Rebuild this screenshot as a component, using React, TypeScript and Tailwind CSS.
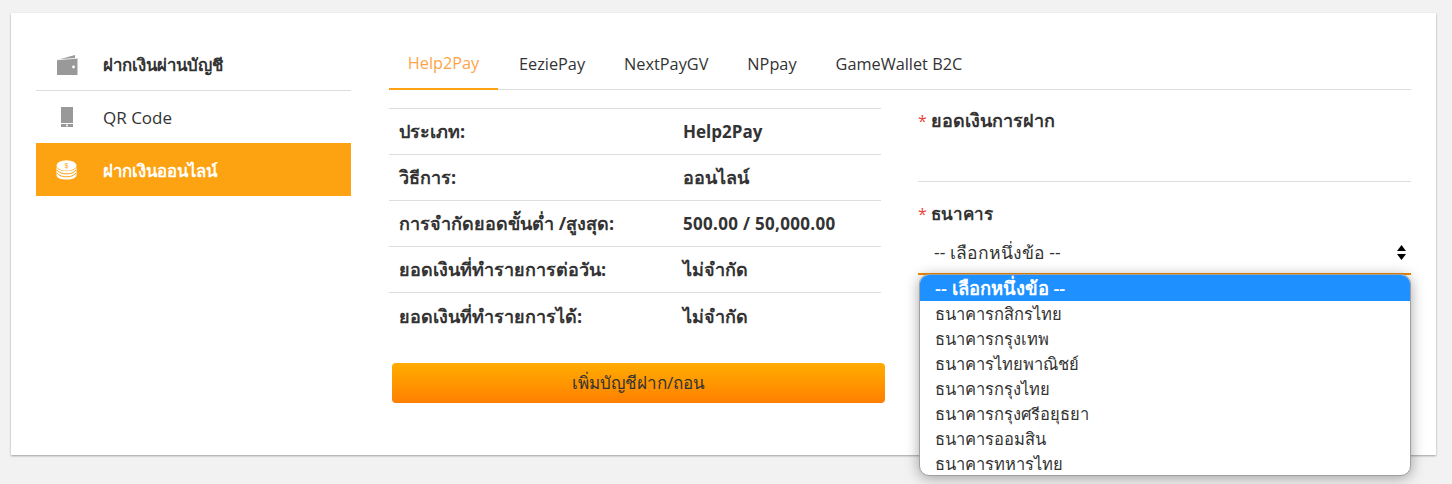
import { Fragment } from 'react'

const rows = [
  ['ประเภท:', 'Help2Pay', 'text-[17px]'],
  ['วิธีการ:', 'ออนไลน์', 'text-[18px]'],
  ['การจำกัดยอดขั้นต่ำ /สูงสุด:', '500.00 / 50,000.00', 'text-[17px] tracking-[0.3px]'],
  ['ยอดเงินที่ทำรายการต่อวัน:', 'ไม่จำกัด', 'text-[18px]'],
  ['ยอดเงินที่ทำรายการได้:', 'ไม่จำกัด', 'text-[18px]'],
]

const banks = [
  'ธนาคารกสิกรไทย',
  'ธนาคารกรุงเทพ',
  'ธนาคารไทยพาณิชย์',
  'ธนาคารกรุงไทย',
  'ธนาคารกรุงศรีอยุธยา',
  'ธนาคารออมสิน',
  'ธนาคารทหารไทย',
]

const tabs = ['EeziePay', 'NextPayGV', 'NPpay', 'GameWallet B2C']

function WalletIcon() {
  return (
    <svg width="21" height="20" viewBox="0 0 21 20">
      <path d="M0 5 L18 0 V3 H20.5 V20 H0 Z" fill="#999" />
      <path d="M0.5 4.8 L17 3.4 H20.5" stroke="#fff" strokeWidth="0.8" fill="none" />
      <circle cx="16.5" cy="12" r="1.4" fill="#fff" />
    </svg>
  )
}

function PhoneIcon() {
  return (
    <svg width="12" height="20" viewBox="0 0 12 20">
      <rect x="0" y="0" width="12" height="16" fill="#999" />
      <rect x="0" y="17" width="12" height="3" fill="#999" />
      <circle cx="6" cy="18.5" r="1" fill="#fff" />
    </svg>
  )
}

function CoinsIcon() {
  return (
    <svg width="21" height="20" viewBox="0 0 21 20">
      <ellipse cx="10.5" cy="5.5" rx="10" ry="5.2" fill="#fff" />
      <path d="M0.5 6 V15 C0.5 18 5 19.6 10.5 19.6 S20.5 18 20.5 15 V6 C20.5 9.5 16 11.2 10.5 11.2 S0.5 9.5 0.5 6 Z" fill="#fff" />
      <path d="M1 10 C3 13 7 13.8 10.5 13.8 S18 13 20 10 M1 13 C3 16 7 16.8 10.5 16.8 S18 16 20 13" stroke="#fda312" strokeWidth="1" fill="none" />
      <text x="10.5" y="8" fontSize="8" textAnchor="middle" fill="#fda312" fontFamily="Open Sans, sans-serif">$</text>
    </svg>
  )
}

export default function App() {
  return (
    <div className="h-[484px] overflow-hidden bg-[#f2f2f2] pl-[11px] pt-[13px] font-['Open_Sans','Noto_Sans',sans-serif] text-[#333]">
      <div className="relative flex h-[442px] w-[1425px] bg-white pl-[25px] pr-[25px] pt-[26px] shadow-[0_1px_2px_rgba(0,0,0,0.35)]">
        {/* Left menu */}
        <div className="w-[315px] shrink-0 text-[16.8px]">
          <div className="flex h-[52px] items-center border-b border-[#dedede] pl-[20px]">
            <div className="flex w-[47px] items-center pl-[1px]"><WalletIcon /></div>
            <span className="font-semibold">ฝากเงินผ่านบัญชี</span>
          </div>
          <div className="flex h-[52px] items-center pl-[20px]">
            <div className="flex w-[47px] items-center pl-[5px]"><PhoneIcon /></div>
            <span className="mt-[2px] text-[17px]">QR Code</span>
          </div>
          <div className="flex h-[53px] items-center bg-[#fda312] pl-[20px] text-white">
            <div className="flex w-[47px] items-center"><CoinsIcon /></div>
            <span className="mt-[2px] font-semibold">ฝากเงินออนไลน์</span>
          </div>
        </div>

        <div className="ml-[38px] w-[1022px] shrink-0">
          {/* Tabs */}
          <div className="flex h-[51px] border-b border-[#dedede] text-[16.3px]">
            <div className="mr-[1.5px] flex h-[51px] w-[109px] items-center justify-center border-b-2 border-[#fda312] text-[#fda54a]">Help2Pay</div>
            {tabs.map((t) => (
              <div key={t} className="flex items-center px-[19.5px]">{t}</div>
            ))}
          </div>

          <div className="flex pt-[18px]">
            <div className="w-[492px] shrink-0">
              <div className="grid grid-cols-[285px_1fr] border-t border-[#dedede] font-bold">
                {rows.map(([k, v, size], i) => (
                  <Fragment key={k}>
                    <div className={`flex h-[46px] items-center pl-[10px] text-[18px] ${i < 4 ? 'border-b border-[#dedede]' : ''}`}>{k}</div>
                    <div className={`flex h-[46px] items-center pl-[9px] ${size} ${i < 4 ? 'border-b border-[#dedede]' : ''}`}>{v}</div>
                  </Fragment>
                ))}
              </div>
              <button className="ml-[3px] mt-[24px] h-[40px] w-[493px] rounded-[4px] bg-gradient-to-b from-[#ffac00] to-[#ff7f00] text-[17px] text-[#333]">
                เพิ่มบัญชีฝาก/ถอน
              </button>
            </div>

            {/* Form */}
            <div className="ml-[37px] w-[493px] shrink-0">
              <div className="text-[18px] font-bold leading-[24px]">
                <span className="mr-[4px] text-[16px] font-normal text-[#e8443a]">*</span>ยอดเงินการฝาก
              </div>
              <div className="mt-[48px] border-b border-[#dedede]" />
              <div className="mt-[20px] text-[17px] font-bold leading-[24px]">
                <span className="mr-[4px] text-[16px] font-normal text-[#e8443a]">*</span>ธนาคาร
              </div>
              <div className="relative mt-[8px] flex h-[41px] items-center justify-between border-b-2 border-[#f08c00] pb-[2px] pl-[16px] pr-[5px] text-[17.5px]">
                <span>-- เลือกหนึ่งข้อ --</span>
                <svg width="9" height="15" viewBox="0 0 9 15" fill="#000">
                  <path d="M4.5 0 L9 6 H0 Z M0 9 H9 L4.5 15 Z" />
                </svg>
              </div>
            </div>
          </div>
        </div>

        {/* Open select list */}
        <div className="absolute left-[908px] top-[261px] z-10 h-[202px] w-[492px] overflow-hidden rounded-[10px] border border-[#a0a0a0] bg-white text-[16.5px] shadow-[0_2px_14px_rgba(0,0,0,0.35)]">
          <div className="h-[26px] bg-[#1e90ff] pl-[15px] text-[18.4px] font-semibold leading-[26px] text-white">-- เลือกหนึ่งข้อ --</div>
          {banks.map((b) => (
            <div key={b} className="h-[25px] pl-[15px] leading-[26px]">{b}</div>
          ))}
        </div>
      </div>
    </div>
  )
}
